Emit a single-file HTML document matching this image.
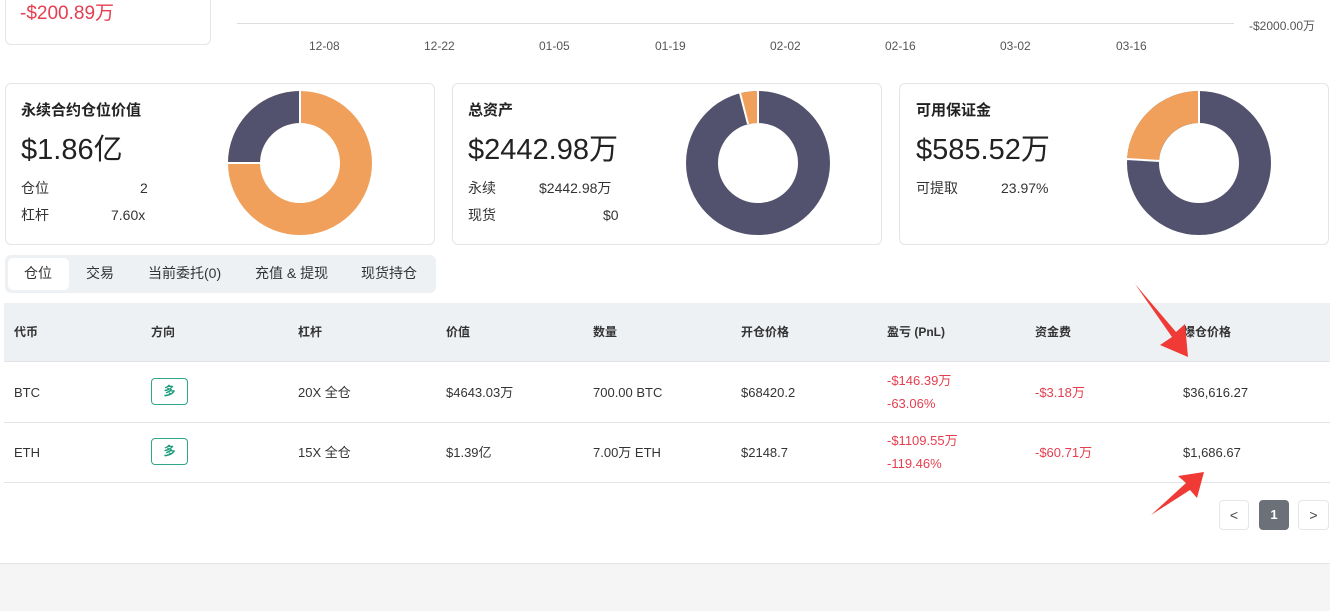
<!DOCTYPE html>
<html><head><meta charset="utf-8"><style>
*{margin:0;padding:0;box-sizing:border-box}
body{width:1330px;height:611px;background:#fff;font-family:"Liberation Sans","Noto Sans CJK SC",sans-serif;color:#222;position:relative;overflow:hidden}
.a{position:absolute;white-space:nowrap;line-height:18px}
.card{position:absolute;border:1px solid #e3e5e8;border-radius:6px;background:#fff}
.t{font-size:15px;font-weight:bold;color:#222;line-height:20px}
.big{font-size:29px;color:#222;line-height:36px}
.s{font-size:14px;color:#333;line-height:18px}
.th{font-size:12px;font-weight:bold;color:#333;line-height:16px}
.td{font-size:13px;color:#333;line-height:17px}
.red{color:#e53e4f}
.badge{position:absolute;width:37px;height:27px;border:1px solid #2fa58a;border-radius:4px;color:#1e9c7c;font-size:12px;font-weight:bold;text-align:center;line-height:25px}
</style></head><body>
<div class="card" style="left:5px;top:-10px;width:206px;height:55px"></div>
<div class="a red" style="left:20px;top:2px;font-size:19px;line-height:24px">-$200.89万</div>
<div class="a" style="left:237px;top:23px;width:997px;height:1px;background:#ddd"></div>
<div class="a" style="left:1249px;top:17px;font-size:12px;color:#555">-$2000.00万</div>
<div class="a" style="left:309px;top:37px;font-size:12px;color:#555">12-08</div>
<div class="a" style="left:424px;top:37px;font-size:12px;color:#555">12-22</div>
<div class="a" style="left:539px;top:37px;font-size:12px;color:#555">01-05</div>
<div class="a" style="left:655px;top:37px;font-size:12px;color:#555">01-19</div>
<div class="a" style="left:770px;top:37px;font-size:12px;color:#555">02-02</div>
<div class="a" style="left:885px;top:37px;font-size:12px;color:#555">02-16</div>
<div class="a" style="left:1000px;top:37px;font-size:12px;color:#555">03-02</div>
<div class="a" style="left:1116px;top:37px;font-size:12px;color:#555">03-16</div>

<div class="card" style="left:5px;top:83px;width:430px;height:162px"></div>
<div class="a t" style="left:21px;top:101px">永续合约仓位价值</div>
<div class="a big" style="left:21px;top:132px">$1.86亿</div>
<div class="a s" style="left:21px;top:179px">仓位</div><div class="a s" style="left:140px;top:179px">2</div>
<div class="a s" style="left:21px;top:206px">杠杆</div><div class="a s" style="left:111px;top:206px">7.60x</div>

<div class="card" style="left:452px;top:83px;width:430px;height:162px"></div>
<div class="a t" style="left:468px;top:101px">总资产</div>
<div class="a big" style="left:468px;top:132px">$2442.98万</div>
<div class="a s" style="left:468px;top:179px">永续</div><div class="a s" style="left:539px;top:179px">$2442.98万</div>
<div class="a s" style="left:468px;top:206px">现货</div><div class="a s" style="left:603px;top:206px">$0</div>

<div class="card" style="left:899px;top:83px;width:430px;height:162px"></div>
<div class="a t" style="left:916px;top:101px">可用保证金</div>
<div class="a big" style="left:916px;top:132px">$585.52万</div>
<div class="a s" style="left:916px;top:179px">可提取</div><div class="a s" style="left:1001px;top:179px">23.97%</div>

<svg class="a" style="left:0;top:0" width="1330" height="611">
<g fill="none" stroke-width="32">
<circle cx="300" cy="163" r="56" stroke="#f0a05a"/>
<path d="M300 107 A56 56 0 0 0 244 163" stroke="#52526e"/>
<circle cx="758" cy="163" r="56" stroke="#52526e"/>
<path d="M758 107 A56 56 0 0 0 744 108.8" stroke="#f0a05a"/>
<circle cx="1199" cy="163" r="56" stroke="#52526e"/>
<path d="M1199 107 A56 56 0 0 0 1143 160" stroke="#f0a05a"/>
</g>
<g stroke="#fff" stroke-width="2">
<line x1="300" y1="90" x2="300" y2="124"/><line x1="227" y1="163" x2="261" y2="163"/>
<line x1="758" y1="90" x2="758" y2="124"/><line x1="739.5" y1="91" x2="748" y2="124"/>
<line x1="1199" y1="90" x2="1199" y2="124"/><line x1="1126" y1="159" x2="1160" y2="161"/>
</g>
</svg>

<div class="a" style="left:5px;top:255px;width:431px;height:38px;background:#eef1f4;border-radius:6px"></div>
<div class="a" style="left:8px;top:258px;width:61px;height:32px;background:#fff;border-radius:5px"></div>
<div class="a s" style="left:24px;top:264px">仓位</div>
<div class="a s" style="left:86px;top:264px">交易</div>
<div class="a s" style="left:148px;top:264px">当前委托(0)</div>
<div class="a s" style="left:255px;top:264px">充值 &amp; 提现</div>
<div class="a s" style="left:361px;top:264px">现货持仓</div>

<div class="a" style="left:4px;top:303px;width:1326px;height:59px;background:#edf1f4;border-bottom:1px solid #e2e4e7"></div>
<div class="a th" style="left:14px;top:324px">代币</div>
<div class="a th" style="left:151px;top:324px">方向</div>
<div class="a th" style="left:298px;top:324px">杠杆</div>
<div class="a th" style="left:446px;top:324px">价值</div>
<div class="a th" style="left:593px;top:324px">数量</div>
<div class="a th" style="left:741px;top:324px">开仓价格</div>
<div class="a th" style="left:887px;top:324px">盈亏 (PnL)</div>
<div class="a th" style="left:1035px;top:324px">资金费</div>
<div class="a th" style="left:1183px;top:324px">爆仓价格</div>

<div class="a" style="left:4px;top:422px;width:1326px;height:1px;background:#e2e4e7"></div>
<div class="a" style="left:4px;top:482px;width:1326px;height:1px;background:#e2e4e7"></div>

<div class="a td" style="left:14px;top:384px">BTC</div>
<div class="badge" style="left:151px;top:378px">多</div>
<div class="a td" style="left:298px;top:384px">20X 全仓</div>
<div class="a td" style="left:446px;top:384px">$4643.03万</div>
<div class="a td" style="left:593px;top:384px">700.00 BTC</div>
<div class="a td" style="left:741px;top:384px">$68420.2</div>
<div class="a td red" style="left:887px;top:372px">-$146.39万</div>
<div class="a td red" style="left:887px;top:395px">-63.06%</div>
<div class="a td red" style="left:1035px;top:384px">-$3.18万</div>
<div class="a td" style="left:1183px;top:384px">$36,616.27</div>

<div class="a td" style="left:14px;top:444px">ETH</div>
<div class="badge" style="left:151px;top:438px">多</div>
<div class="a td" style="left:298px;top:444px">15X 全仓</div>
<div class="a td" style="left:446px;top:444px">$1.39亿</div>
<div class="a td" style="left:593px;top:444px">7.00万 ETH</div>
<div class="a td" style="left:741px;top:444px">$2148.7</div>
<div class="a td red" style="left:887px;top:432px">-$1109.55万</div>
<div class="a td red" style="left:887px;top:455px">-119.46%</div>
<div class="a td red" style="left:1035px;top:444px">-$60.71万</div>
<div class="a td" style="left:1183px;top:444px">$1,686.67</div>

<div class="a" style="left:1219px;top:500px;width:30px;height:30px;border:1px solid #e6e6e6;border-radius:4px;text-align:center;line-height:28px;font-size:14px;color:#444">&lt;</div>
<div class="a" style="left:1259px;top:500px;width:30px;height:30px;background:#6b7079;border-radius:4px;text-align:center;line-height:30px;font-size:13px;font-weight:bold;color:#fff">1</div>
<div class="a" style="left:1298px;top:500px;width:31px;height:30px;border:1px solid #e6e6e6;border-radius:4px;text-align:center;line-height:28px;font-size:14px;color:#444">&gt;</div>

<div class="a" style="left:0;top:563px;width:1330px;height:48px;background:#f5f5f5;border-top:1px solid #e4e4e4"></div>

<svg class="a" style="left:0;top:0" width="1330" height="611">
<polygon fill="#f03a36" points="1135,284 1172,337 1160,345 1188,357 1185,324 1176,332"/>
<polygon fill="#f03a36" points="1151,515 1190,490 1197,498 1204,472 1178,476 1186,483"/>
</svg>
</body></html>
